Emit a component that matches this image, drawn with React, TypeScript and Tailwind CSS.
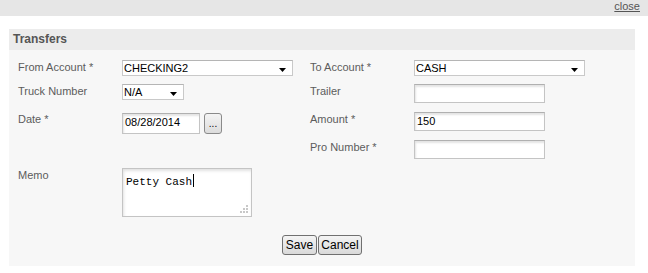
import React from 'react'

const font = { fontFamily: '"Liberation Sans", Arial, sans-serif' }

function Arrow() {
  return (
    <svg width="7" height="4" viewBox="0 0 7 4" className="absolute right-[6px] bottom-[3px]">
      <path d="M0 0 H7 L3.5 4 Z" fill="#000" />
    </svg>
  )
}

function Select({ value, width }: { value: string; width: string }) {
  return (
    <div
      className={`relative h-[16px] ${width} border border-[#c9c9c9] border-t-[#b5b5b5] bg-white pl-[1px] text-[11px] leading-[14px] text-black`}
    >
      {value}
      <Arrow />
    </div>
  )
}

function TextInput({ value = '', width = 'w-[131px]', height = 'h-[19px]' }: { value?: string; width?: string; height?: string }) {
  return (
    <div
      className={`${width} ${height} border border-[#c4c4c4] border-t-[#b0b0b0] bg-white px-[2px] text-[11px] leading-[17px] text-black shadow-[inset_1px_2px_2px_#e4e4e4]`}
    >
      {value}
    </div>
  )
}

function Label({ children }: { children: React.ReactNode }) {
  return <div className="w-[104px] shrink-0 text-[11px] leading-[15px] text-[#5c5c5c]">{children}</div>
}

function Button({ children, width }: { children: React.ReactNode; width: string }) {
  return (
    <button
      type="button"
      className={`h-[20px] ${width} rounded-[3px] border border-[#707070] bg-gradient-to-b from-[#f4f4f4] to-[#d9d9d9] text-[12px] leading-[17px] text-black`}
    >
      {children}
    </button>
  )
}

export default function App() {
  return (
    <div className="h-[273px] w-[648px] bg-white" style={font}>
      <div className="flex h-[16px] justify-end bg-[#e6e6e6] pr-[8px]">
        <a className="text-[11px] leading-[13px] text-[#555] underline">close</a>
      </div>

      <div className="mx-[9px] mt-[13px] w-[626px] bg-[#f7f7f7]">
        <div className="h-[21px] bg-[#ececec] pl-[4px] text-[12px] font-bold leading-[21px] text-[#555]">
          Transfers
        </div>

        <div className="pl-[9px] pt-[10px] pb-[11px]">
          <div className="flex h-[24px] items-start">
            <Label>From Account *</Label>
            <div className="w-[188px]">
              <Select value="CHECKING2" width="w-[171px]" />
            </div>
            <Label>To Account *</Label>
            <Select value="CASH" width="w-[171px]" />
          </div>

          <div className="flex h-[28px] items-start">
            <Label>Truck Number</Label>
            <div className="w-[188px]">
              <Select value="N/A" width="w-[62px]" />
            </div>
            <Label>Trailer</Label>
            <TextInput />
          </div>

          <div className="flex h-[28px] items-start">
            <Label>Date *</Label>
            <div className="flex w-[188px] gap-[4px] pt-[1px]">
              <TextInput value="08/28/2014" width="w-[78px]" height="h-[21px]" />
              <button
                type="button"
                className="h-[21px] w-[18px] rounded-[3px] border border-[#8a8a8a] bg-gradient-to-b from-[#f4f4f4] to-[#dcdcdc] text-[10px] leading-[18px] text-black"
              >
                ...
              </button>
            </div>
            <Label>Amount *</Label>
            <TextInput value="150" />
          </div>

          <div className="flex h-[28px] items-start">
            <Label>&nbsp;</Label>
            <div className="w-[188px]" />
            <Label>Pro Number *</Label>
            <TextInput />
          </div>

          <div className="flex h-[49px] items-start">
            <Label>Memo</Label>
            <div className="relative h-[49px] w-[130px] border border-[#c4c4c4] bg-white px-[3px] pt-[3px] text-[11px] leading-[13px] text-black shadow-[inset_1px_2px_3px_#e2e2e2]">
              <span style={{ fontFamily: '"Liberation Mono", "Courier New", monospace' }}>Petty Cash</span>
              <span className="ml-[1px] inline-block h-[13px] w-[1px] translate-y-[2px] bg-black" />
              <svg width="9" height="9" viewBox="0 0 9 9" className="absolute bottom-[2px] right-[2px]">
                <rect x="6" y="0" width="2" height="2" fill="#c8c8c8" />
                <rect x="3" y="3" width="2" height="2" fill="#c8c8c8" />
                <rect x="6" y="3" width="2" height="2" fill="#c8c8c8" />
                <rect x="0" y="6" width="2" height="2" fill="#c8c8c8" />
                <rect x="3" y="6" width="2" height="2" fill="#c8c8c8" />
                <rect x="6" y="6" width="2" height="2" fill="#c8c8c8" />
              </svg>
            </div>
          </div>

          <div className="mt-[18px] flex justify-center gap-[1px] pr-[9px]">
            <Button width="w-[35px]">Save</Button>
            <Button width="w-[44px]">Cancel</Button>
          </div>
        </div>
      </div>
    </div>
  )
}
